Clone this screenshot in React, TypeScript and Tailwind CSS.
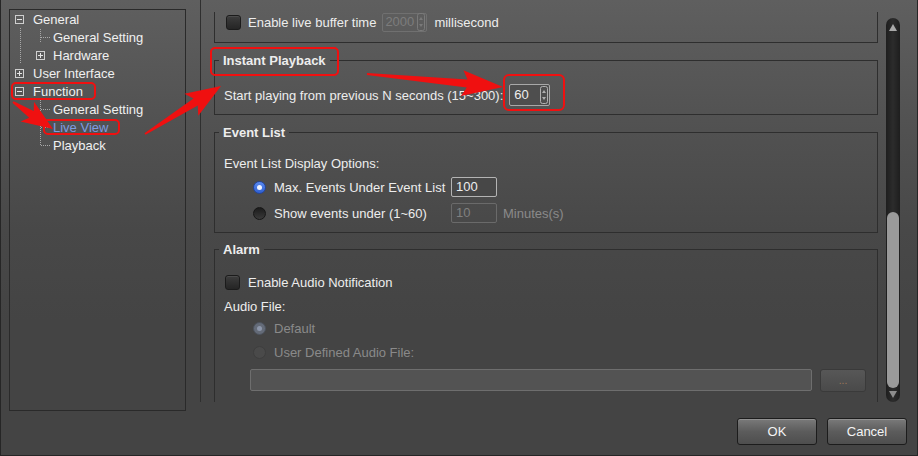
import React from "react";

type Pt = [number, number];

// tapered annotation arrow: thin tail, wider neck, barbed head
function arrowPoints(tail: Pt, tip: Pt, tw: number, nw: number, hl: number, hw: number) {
  const dx = tip[0] - tail[0];
  const dy = tip[1] - tail[1];
  const len = Math.hypot(dx, dy);
  const ux = dx / len;
  const uy = dy / len;
  const px = -uy;
  const py = ux;
  const nx = tip[0] - ux * hl;
  const ny = tip[1] - uy * hl;
  const bx = nx - ux * 5;
  const by = ny - uy * 5;
  const pts: Pt[] = [
    [tail[0] + (px * tw) / 2, tail[1] + (py * tw) / 2],
    [nx + (px * nw) / 2, ny + (py * nw) / 2],
    [bx + (px * hw) / 2, by + (py * hw) / 2],
    tip,
    [bx - (px * hw) / 2, by - (py * hw) / 2],
    [nx - (px * nw) / 2, ny - (py * nw) / 2],
    [tail[0] - (px * tw) / 2, tail[1] - (py * tw) / 2],
  ];
  return pts.map((p) => p.map((v) => v.toFixed(1)).join(",")).join(" ");
}

const treeRows = [
  { label: "General", box: "minus", pad: 5, gap: 9 },
  { label: "General Setting", pad: 43 },
  { label: "Hardware", box: "plus", pad: 26, gap: 8 },
  { label: "User Interface", box: "plus", pad: 5, gap: 9 },
  { label: "Function", box: "minus", pad: 5, gap: 9 },
  { label: "General Setting", pad: 43 },
  { label: "Live View", pad: 43, active: true },
  { label: "Playback", pad: 43 },
];

function TreeBox({ kind }: { kind: string }) {
  return (
    <span className="relative block w-[9px] h-[9px] border border-[#cfcfcf]">
      <span className="absolute left-[1px] top-[3px] w-[5px] h-px bg-[#e6e6e6]" />
      {kind === "plus" && <span className="absolute left-[3px] top-[1px] w-px h-[5px] bg-[#e6e6e6]" />}
    </span>
  );
}

function Tree() {
  return (
    <div className="relative mt-[9px] ml-[8px] w-[177px] h-[402px] border border-[#2a2a2a]">
      <svg className="absolute left-0 top-0" width="175" height="140">
        <g stroke="#a8a8a8" strokeWidth="1" strokeDasharray="1 1" fill="none">
          <line x1="10.5" y1="18" x2="10.5" y2="54" />
          <line x1="30.5" y1="19" x2="30.5" y2="33" />
          <line x1="31" y1="27.5" x2="41" y2="27.5" />
          <line x1="30.5" y1="90" x2="30.5" y2="136" />
          <line x1="31" y1="99.5" x2="41" y2="99.5" />
          <line x1="31" y1="117.5" x2="41" y2="117.5" />
          <line x1="31" y1="135.5" x2="41" y2="135.5" />
        </g>
      </svg>
      <div className="relative flex flex-col">
        {treeRows.map((r, i) => (
          <div key={i} className="flex items-center h-[18px]" style={{ paddingLeft: r.pad }}>
            {r.box && (
              <span style={{ marginRight: r.gap }}>
                <TreeBox kind={r.box} />
              </span>
            )}
            <span className={r.active ? "pt-[2px] text-[#7f9ce2]" : "pt-[2px] text-[#f0f0f0]"}>{r.label}</span>
          </div>
        ))}
      </div>
    </div>
  );
}

function Checkbox() {
  return (
    <span className="block w-[15px] h-[15px] rounded-[3px] border border-[#1b1b1b] bg-linear-to-b from-[#3d3d3d] to-[#252525] shadow-[inset_0_1px_0_rgba(255,255,255,0.08)]" />
  );
}

function Radio({ checked, disabled }: { checked?: boolean; disabled?: boolean }) {
  if (checked && !disabled) {
    return (
      <span className="flex items-center justify-center w-[13px] h-[13px] rounded-full border border-[#23449a] bg-linear-to-b from-[#5a8af0] to-[#2f5fd0]">
        <span className="block w-[5px] h-[5px] rounded-full bg-[#eef3ff]" />
      </span>
    );
  }
  if (checked && disabled) {
    return (
      <span className="flex items-center justify-center w-[13px] h-[13px] rounded-full border border-[#4d535e] bg-[#646b78]">
        <span className="block w-[5px] h-[5px] rounded-full bg-[#8d97ab]" />
      </span>
    );
  }
  return (
    <span
      className={
        disabled
          ? "block w-[13px] h-[13px] rounded-full border border-[#3e3e3e] bg-[#4a4a4a]"
          : "block w-[13px] h-[13px] rounded-full border border-[#161616] bg-linear-to-b from-[#1c1c1c] to-[#3a3a3a]"
      }
    />
  );
}

function SpinArrows({ dim }: { dim?: boolean }) {
  const c = dim ? "#7a7a7a" : "#b0b0b0";
  return (
    <svg width="8" height="18" viewBox="0 0 8 18">
      <rect x="0.5" y="0.5" width="7" height="17" rx="2" fill="none" stroke={c} />
      <path d="M2 7 L4 4 L6 7 Z" fill={c} />
      <path d="M2 11 L4 14 L6 11 Z" fill={c} />
    </svg>
  );
}

function Legend({ children }: { children: React.ReactNode }) {
  return (
    <legend className="ml-[4px] px-[4px] font-bold leading-[18px]">
      <span className="relative top-[1px]">{children}</span>
    </legend>
  );
}

function Settings() {
  return (
    <div className="flex h-[402px] ml-[14px] border-l border-[#2f2f2f]">
      <div className="mt-[12px] h-[390px] w-[685px] overflow-hidden pl-[13px]">
        <div className="-mt-[20px] w-[664px] flex flex-col">
          {/* group scrolled above the top edge */}
          <div className="h-[51px] border-x border-b border-[#2e2e2e] flex items-end pl-[11px] pb-[10px]">
            <div className="flex items-center h-[20px]">
              <Checkbox />
              <span className="ml-[7px] pt-[2px]">Enable live buffer time</span>
              <span className="ml-[6px] flex items-center justify-between w-[45px] h-[19px] border border-[#707070] rounded-[2px] pl-[2px] pr-[1px] text-[#7c7c7c]">
                2000
                <SpinArrows dim />
              </span>
              <span className="ml-[7px] pt-[2px]">millisecond</span>
            </div>
          </div>

          <fieldset className="mt-[8px] border border-[#2e2e2e]">
            <Legend>Instant Playback</Legend>
            <div className="pl-[9px] pt-[15px] pb-[8px]">
              <div className="flex items-center h-[22px]">
                <span className="pt-[1px]">Start playing from previous N seconds (15~300):</span>
                <span className="ml-[6px] flex items-center justify-between w-[41px] h-[22px] border border-[#a8a8a8] rounded-[2px] bg-[#4e4e4e] pl-[4px] pr-[1px]">
                  60
                  <SpinArrows />
                </span>
              </div>
            </div>
          </fieldset>

          <fieldset className="mt-[8px] border border-[#2e2e2e]">
            <Legend>Event List</Legend>
            <div className="pl-[9px] pt-[13px] pb-[9px]">
              <div className="flex items-center h-[18px] pt-[2px]">Event List Display Options:</div>
              <div className="mt-[5px] flex items-center h-[20px] pl-[29px]">
                <Radio checked />
                <span className="ml-[8px] w-[177px] pt-[2px]">Max. Events Under Event List</span>
                <span className="flex items-center w-[46px] h-[20px] border border-[#b4b4b4] rounded-[2px] bg-[#474747] pl-[4px]">100</span>
              </div>
              <div className="mt-[6px] flex items-center h-[20px] pl-[29px]">
                <Radio />
                <span className="ml-[8px] w-[177px] pt-[2px]">Show events under (1~60)</span>
                <span className="flex items-center w-[46px] h-[20px] border border-[#6a6a6a] rounded-[2px] pl-[4px] text-[#808080]">10</span>
                <span className="ml-[6px] pt-[2px] text-[#8a8a8a]">Minutes(s)</span>
              </div>
            </div>
          </fieldset>

          <fieldset className="mt-[7px] border border-[#2e2e2e]">
            <Legend>Alarm</Legend>
            <div className="pl-[9px] pt-[15px] pb-[20px]">
              <div className="flex items-center h-[18px] pl-[1px]">
                <Checkbox />
                <span className="ml-[8px] pt-[2px]">Enable Audio Notification</span>
              </div>
              <div className="mt-[6px] flex items-center h-[18px] pt-[2px]">Audio File:</div>
              <div className="mt-[4px] flex items-center h-[18px] pl-[29px] text-[#8a8a8a]">
                <Radio checked disabled />
                <span className="ml-[8px] pt-[2px]">Default</span>
              </div>
              <div className="mt-[6px] flex items-center h-[18px] pl-[29px] text-[#8a8a8a]">
                <Radio disabled />
                <span className="ml-[8px] pt-[2px]">User Defined Audio File:</span>
              </div>
              <div className="mt-[8px] flex items-center h-[22px] pl-[26px]">
                <span className="block w-[562px] h-[22px] border border-[#6e6e6e] rounded-[2px] bg-[#535353]" />
                <span className="ml-[8px] flex items-center justify-center w-[46px] h-[23px] border border-[#3a3a3a] rounded-[3px] bg-linear-to-b from-[#575757] to-[#4a4a4a] text-[10px] text-[#a07a58]">
                  ...
                </span>
              </div>
            </div>
          </fieldset>
        </div>
      </div>

      {/* scrollbar */}
      <div className="relative mt-[18px] h-[384px] w-[14px] rounded-full bg-linear-to-r from-[#1e1e1e] via-[#2c2c2c] to-[#1e1e1e]">
        <svg className="absolute left-[3px] top-[6px]" width="8" height="7">
          <path d="M0 7 L4 0 L8 7 Z" fill="#a9a9a9" />
        </svg>
        <div className="absolute left-[1px] top-[194px] w-[12px] h-[176px] rounded-full bg-[#9a9a9a]" />
        <svg className="absolute left-[3px] top-[373px]" width="8" height="7">
          <path d="M0 0 L8 0 L4 7 Z" fill="#8c8c8c" />
        </svg>
      </div>
    </div>
  );
}

function DialogButton({ label }: { label: string }) {
  return (
    <button className="w-[80px] h-[27px] rounded-[3px] border border-[#1c1c1c] bg-linear-to-b from-[#7a7a7a] via-[#5c5c5c] to-[#4e4e4e] shadow-[inset_0_1px_0_rgba(255,255,255,0.18)] text-[13px] text-[#f4f4f4] pt-[1px]">
      {label}
    </button>
  );
}

export default function App() {
  return (
    <div className="relative w-[918px] h-[456px] overflow-hidden border-x border-b border-[#262626] bg-[linear-gradient(to_bottom,#5f5f5f_0px,#525252_120px,#484848_230px,#444444_320px,#444444_100%)] font-['Liberation_Sans',Arial,sans-serif] text-[13px] text-[#ededed]">
      <div className="flex h-[411px]">
        <Tree />
        <Settings />
      </div>
      <div className="flex justify-end gap-[10px] pr-[10px] mt-[7px]">
        <DialogButton label="OK" />
        <DialogButton label="Cancel" />
      </div>

      {/* red annotations */}
      <svg className="pointer-events-none absolute left-[-1px] top-0" width="918" height="456">
        <g fill="none" stroke="#f01010" strokeWidth="2">
          <rect x="12" y="83" width="83" height="16" rx="4" />
          <rect x="44" y="120" width="75" height="14" rx="4" />
          <rect x="211" y="48" width="127" height="27" rx="4" />
          <rect x="504" y="75" width="60" height="35" rx="5" />
        </g>
        <g fill="#f01010">
          <polygon points={arrowPoints([13, 102], [53, 129], 2, 8, 26, 24)} />
          <polygon points={arrowPoints([145, 134], [221, 86], 2, 8, 30, 26)} />
          <polygon points={arrowPoints([367, 74], [503, 87], 2, 8, 36, 26)} />
        </g>
      </svg>
    </div>
  );
}
